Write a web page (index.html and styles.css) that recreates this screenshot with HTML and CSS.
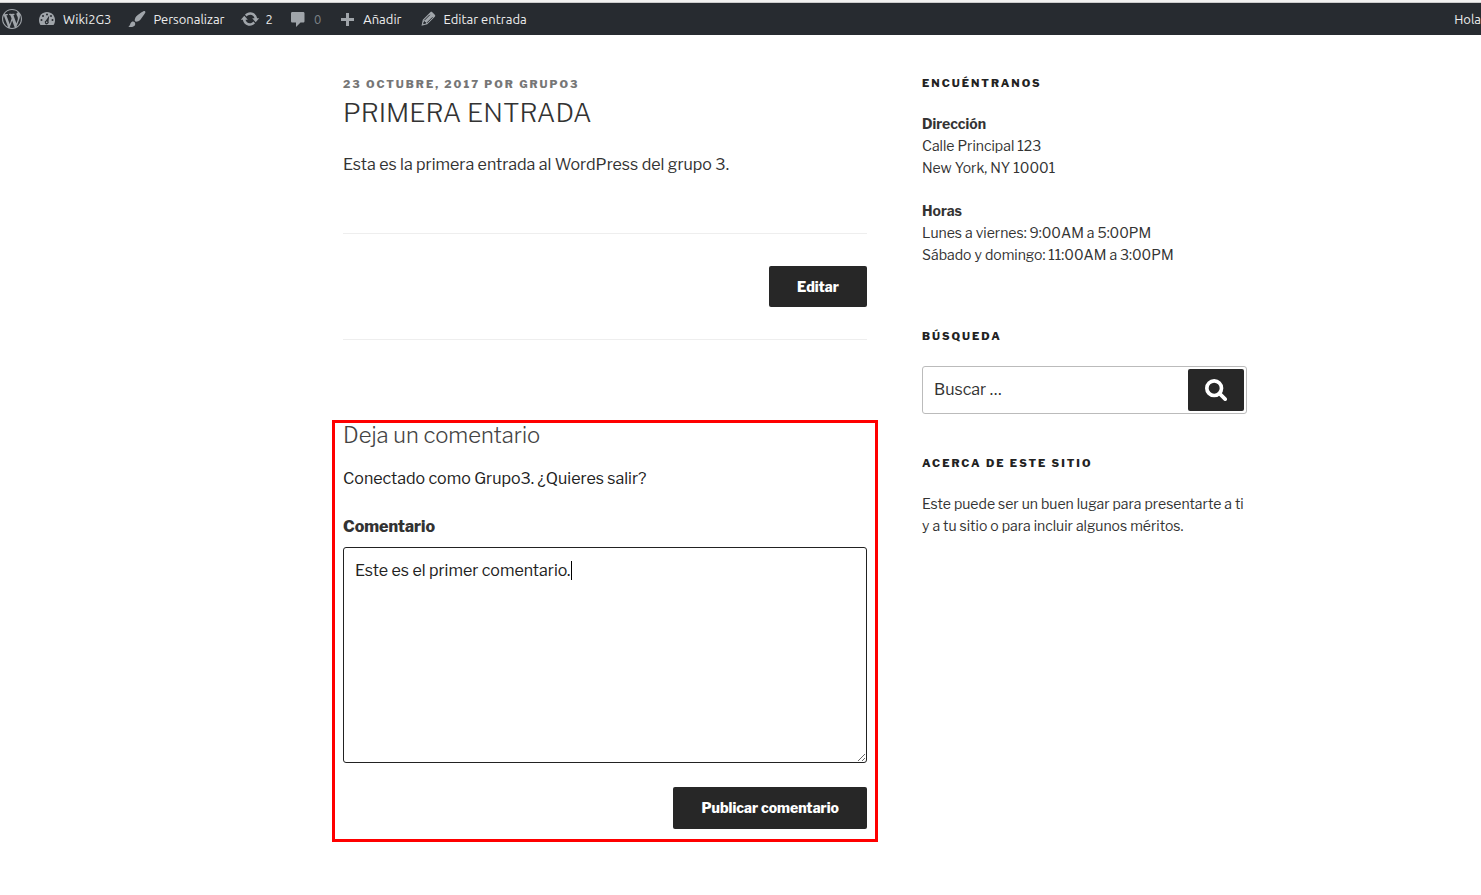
FILE: index.html
```html
<!DOCTYPE html>
<html lang="es">
<head>
<meta charset="utf-8">
<meta name="viewport" content="width=device-width, initial-scale=1">
<title>PRIMERA ENTRADA</title>
<link rel="stylesheet" href="styles.css">
</head>
<body>
<nav class="adminbar" aria-label="Barra de herramientas">
  <a class="adminbar-item" href="#" aria-label="Acerca de WordPress"><svg class="icon" viewBox="0 0 20 20"><path d="M20 10c0-5.51-4.49-10-10-10C4.48 0 0 4.49 0 10c0 5.52 4.48 10 10 10 5.51 0 10-4.48 10-10zM7.78 15.37L4.37 6.22c.55-.02 1.17-.08 1.17-.08.5-.06.44-1.13-.06-1.11 0 0-1.45.11-2.37.11-.18 0-.37 0-.58-.01C4.12 2.69 6.87 1.11 10 1.11c2.33 0 4.45.87 6.05 2.34-.68-.11-1.65.39-1.65 1.58 0 .74.45 1.36.9 2.1.35.61.55 1.36.55 2.46 0 1.49-1.4 5-1.4 5l-3.03-8.37c.54-.02.82-.17.82-.17.5-.05.44-1.25-.06-1.22 0 0-1.44.12-2.38.12-.87 0-2.33-.12-2.33-.12-.5-.03-.56 1.2-.06 1.22l.92.08 1.26 3.41zM17.41 10c.24-.64.74-1.87.43-4.25.7 1.29 1.05 2.71 1.05 4.25 0 3.29-1.73 6.24-4.4 7.78.97-2.59 1.94-5.2 2.92-7.78zM6.1 18.09C3.12 16.65 1.11 13.53 1.11 10c0-1.3.23-2.48.72-3.59C3.25 10.3 4.67 14.2 6.1 18.09zm4.03-6.63l2.58 6.98c-.86.29-1.76.45-2.71.45-.79 0-1.57-.11-2.29-.33.81-2.38 1.62-4.74 2.42-7.1z"/></svg></a>
  <a class="adminbar-item" href="#"><svg class="icon" viewBox="0 0 20 20"><path d="M3.500 16h13C17.500 14.800 18 13 18 11c0-4.400-3.600-8-8-8s-8 3.600-8 8c0 2 .5 3.800 1.500 5z"/><g class="cutout"><circle cx="10" cy="5.500" r="1"/><circle cx="6" cy="7" r="1"/><circle cx="14" cy="7" r="1"/><circle cx="4.500" cy="11" r="1"/><circle cx="15.500" cy="11" r="1"/><path d="M12.300 6.500l-.8 5.800a2 2 0 1 1-2.600-.8z"/></g><circle cx="9.700" cy="13.200" r=".8"/></svg>Wiki2G3</a>
  <a class="adminbar-item" href="#"><svg class="icon" viewBox="0 0 20 20"><path d="M18.33 3.57s.27-.8-.31-1.36c-.53-.52-1.22-.24-1.22-.24-.61.3-5.76 3.47-7.67 5.57-.86.96-2.06 3.79-1.09 4.82.92.98 3.96-.17 4.79-1 2.06-2.06 5.21-7.17 5.5-7.79zM1.4 17.65c2.37-1.56 1.46-3.41 3.23-4.64.93-.65 2.22-.62 3.08.29.63.67.8 2.57-.16 3.46-1.57 1.45-4 1.55-6.15.89z"/></svg>Personalizar</a>
  <a class="adminbar-item adminbar-count" href="#"><svg class="icon" viewBox="0 0 20 20"><path d="M10.200 3.280c3.530 0 6.430 2.610 6.920 6h2.080l-3.500 4-3.500-4h2.320c-.45-1.970-2.210-3.450-4.320-3.450-1.450 0-2.730.71-3.540 1.780L4.950 5.660C6.230 4.200 8.110 3.280 10.200 3.280zm-.4 13.440c-3.520 0-6.430-2.610-6.920-6H.8l3.500-4c1.170 1.330 2.330 2.670 3.500 4H5.480c.45 1.970 2.210 3.450 4.320 3.450 1.450 0 2.730-.71 3.540-1.780l1.710 1.950c-1.280 1.460-3.150 2.380-5.250 2.380z"/></svg>2</a>
  <a class="adminbar-item adminbar-count" href="#"><svg class="icon" viewBox="0 0 20 20"><path d="M4.500 3h10.500c1 0 1.500.5 1.500 1.500v7.500c0 1-.5 1.500-1.500 1.500h-2.500l-4.500 4.500v-4.500H4.500c-1 0-1.500-.5-1.500-1.500V4.500c0-1 .5-1.500 1.500-1.500z"/></svg><span class="count-empty">0</span></a>
  <a class="adminbar-item" href="#"><svg class="icon" viewBox="0 0 20 20"><path d="M17 9v3h-5v5H9v-5H4V9h5V4h3v5h5z"/></svg>Añadir</a>
  <a class="adminbar-item" href="#"><svg class="icon" viewBox="0 0 20 20"><path d="M3.500 16.800l1.300-6L12.300 3.300c.6-.6 1.400-.6 2 0l2.500 2.500c.6.600.6 1.400 0 2L9.300 15.300z"/><path class="pencil-lines" d="M6.300 11.300l5.500-5.500M9 13.800l5.500-5.500M5.600 14.600l.8-2 1.500 1.400z"/></svg>Editar entrada</a>
  <a class="adminbar-account" href="#">Hola</a>
</nav>
<div class="layout">
  <main class="primary">
    <article class="post">
      <p class="post-meta"><a href="#">23 octubre, 2017</a> por <a href="#">Grupo3</a></p>
      <h1 class="post-title">PRIMERA ENTRADA</h1>
      <p class="post-body">Esta es la primera entrada al WordPress del grupo 3.</p>
      <footer class="post-footer"><button class="button" type="button">Editar</button></footer>
    </article>
    <section class="comments">
      <h2 class="comments-title">Deja un comentario</h2>
      <p class="comments-user"><a href="#">Conectado como Grupo3</a>. <a href="#">¿Quieres salir?</a></p>
      <form class="comment-form">
        <label class="comment-label" for="comment">Comentario</label>
        <div class="comment-box">
          <textarea class="comment-input" id="comment">Este es el primer comentario.</textarea>
          <span class="caret"></span>
        </div>
        <button class="button" type="button">Publicar comentario</button>
      </form>
    </section>
  </main>
  <aside class="sidebar">
    <section class="widget widget-contact">
      <h2 class="widget-title">Encuéntranos</h2>
      <p><strong>Dirección</strong><br>Calle Principal 123<br>New York, NY 10001</p>
      <p><strong>Horas</strong><br>Lunes a viernes: 9:00AM a 5:00PM<br>Sábado y domingo: 11:00AM a 3:00PM</p>
    </section>
    <section class="widget">
      <h2 class="widget-title">Búsqueda</h2>
      <form class="search">
        <input class="search-input" type="search" placeholder="Buscar …" aria-label="Buscar">
        <button class="search-button" type="button" aria-label="Buscar"><svg viewBox="0 0 24 24"><circle cx="10" cy="10" r="8"/><path d="M16 16l6 6"/></svg></button>
      </form>
    </section>
    <section class="widget">
      <h2 class="widget-title">Acerca de este sitio</h2>
      <p>Este puede ser un buen lugar para presentarte a ti y a tu sitio o para incluir algunos méritos.</p>
    </section>
  </aside>
</div>
</body>
</html>
```
FILE: styles.css
```css
* { box-sizing: border-box; }

body {
  margin: 0;
  border-top: 2px solid #f2f1f0;
  background: #fff;
  color: #333;
  font: 16px/24px "Libre Franklin", Inter, sans-serif;
}

a { color: inherit; text-decoration: none; }
h1, h2, p { margin: 0; }

.adminbar {
  display: flex;
  height: 33px;
  border-top: 1px solid #ccc;
  background: #272b30;
  color: #eee;
  font: 13px/32px Ubuntu, "Noto Sans", sans-serif;
  overflow: hidden;
  white-space: nowrap;
}
.adminbar-item {
  display: flex;
  align-items: center;
  gap: 6px;
  padding: 0 8px;
}
.adminbar-item:first-child { padding: 0 7px 0 2px; }
.adminbar-count { padding-left: 7px; }
.adminbar-account { margin-left: auto; }
.icon { width: 20px; height: 20px; fill: #a0a5aa; }
.cutout { fill: #272b30; }
.pencil-lines { fill: #272b30; stroke: #272b30; }
.count-empty { color: #7c8186; }

.layout {
  display: grid;
  grid-template-columns: 343fr 524fr 55fr 325fr 234fr;
  padding-top: 37px;
}
.primary { grid-column: 2; }
.sidebar { grid-column: 4; font-size: 14px; line-height: 22px; }

.post-meta {
  color: #767676;
  font-size: 11px;
  font-weight: 800;
  letter-spacing: 2px;
  text-transform: uppercase;
}
.post-title { font-size: 26px; font-weight: 300; line-height: 34px; }
.post-body { padding: 23px 0 56px; }
.post-footer {
  padding: 32px 0;
  border: solid #eee;
  border-width: 1px 0;
  text-align: right;
}

.button {
  display: block;
  margin-left: auto;
  padding: 10px 28px;
  border: 0;
  border-radius: 2px;
  background: #272727;
  color: #fff;
  font: 800 14px/21px "Libre Franklin", Inter, sans-serif;
}

.comments {
  margin: 80px -11px 0;
  padding: 0 8px 10px;
  border: 3px solid #f00;
}
.comments-title { color: #444; font-size: 22px; font-weight: 300; }
.comments-user { padding: 20px 0 24px; color: #222; }
.comment-label { display: block; margin-bottom: 8px; font-weight: 800; }
.comment-box { position: relative; margin-bottom: 24px; }
.comment-input {
  display: block;
  width: 100%;
  height: 216px;
  padding: 11px;
  border: 1px solid #222;
  border-radius: 3px;
  color: #222;
  font: inherit;
  resize: vertical;
}
.comment-form .button { line-height: 22px; }
.caret {
  position: absolute;
  top: 14px;
  left: 228px;
  width: 1px;
  height: 19px;
  background: #000;
}

.widget { padding-bottom: 38px; }
.widget-contact { padding-bottom: 59px; }
.widget p { margin-bottom: 21px; }
.widget p:last-child { margin-bottom: 0; }
.widget-title {
  margin-bottom: 19px;
  color: #222;
  font-size: 11px;
  font-weight: 800;
  letter-spacing: 2px;
  text-transform: uppercase;
}
.search {
  display: flex;
  height: 48px;
  padding: 2px;
  border: 1px solid #bbb;
  border-radius: 3px;
}
.search-input {
  flex: 1;
  min-width: 0;
  padding: 0 9px;
  border: 0;
  font: inherit;
  font-size: 16px;
}
.search-input::placeholder { color: #333; }
.search-button {
  width: 56px;
  padding: 0;
  border: 0;
  border-radius: 2px;
  background: #272727;
}
.search-button svg {
  display: block;
  width: 22px;
  margin: auto;
  fill: none;
  stroke: #fff;
  stroke-width: 4;
  stroke-linecap: round;
}
```
